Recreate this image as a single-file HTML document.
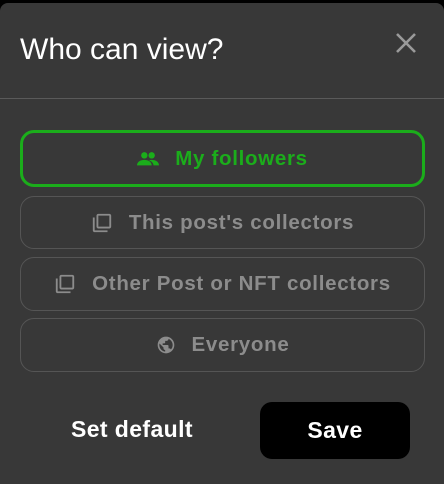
<!DOCTYPE html>
<html><head><meta charset="utf-8"><style>
*{margin:0;padding:0;box-sizing:border-box}
html,body{width:444px;height:484px;background:#000;overflow:hidden;font-family:"Liberation Sans",Arial,sans-serif}
.panel{position:absolute;left:0;top:3px;width:444px;height:481px;background:#383838;border-radius:8px 8px 0 0}
.title{position:absolute;left:20px;top:30px;font-size:30px;color:#fff;line-height:34px}
.x{position:absolute;left:396px;top:30px}
.hr{position:absolute;left:0;top:95px;width:444px;height:1px;background:#5a5a5a}
.opt{position:absolute;left:20px;width:405px;border:1px solid #555;border-radius:14px;display:flex;align-items:center;justify-content:center;font-weight:bold;font-size:20.5px;letter-spacing:0.7px;color:#8c8c8c;gap:16px}
.opt svg{fill:#8c8c8c}
.sel{border:3px solid #1bad1b;color:#1bad1b}
.sel svg{fill:#1bad1b}
.sd{position:absolute;left:71px;top:413px;font-size:23px;letter-spacing:0.4px;font-weight:bold;color:#fff}
.save{position:absolute;left:260px;top:399px;width:150px;height:57px;background:#000;border-radius:12px;color:#fff;font-weight:bold;font-size:23px;letter-spacing:0.4px;display:flex;align-items:center;justify-content:center}
</style></head><body>
<div class="panel">
<div class="title">Who can view?</div>
<svg class="x" width="20" height="20" viewBox="0 0 20 20"><path d="M1 1L19 19M19 1L1 19" stroke="#9a9a9a" stroke-width="2.6"/></svg>
<div class="hr"></div>
<div class="opt sel" style="top:127px;height:57px"><svg width="22" height="16" viewBox="0 0 24 16"><circle cx="8" cy="4" r="3.5"/><circle cx="16" cy="4" r="3.5"/><path d="M0 15c0-4 4-6 8-6s8 2 8 6z"/><path d="M13 9.3c1-.2 2-.3 3-.3 4 0 8 2 8 6h-6c0-2.5-2-4.5-5-5.7z"/></svg>My followers</div>
<div class="opt" style="top:193px;height:53px"><svg width="22" height="22" viewBox="0 0 24 24"><path d="M4 6H2v14c0 1.1.9 2 2 2h14v-2H4V6zm16-4H8c-1.1 0-2 .9-2 2v12c0 1.1.9 2 2 2h12c1.1 0 2-.9 2-2V4c0-1.1-.9-2-2-2zm0 14H8V4h12v12z"/></svg>This post's collectors</div>
<div class="opt" style="top:254px;height:54px"><svg width="22" height="22" viewBox="0 0 24 24"><path d="M4 6H2v14c0 1.1.9 2 2 2h14v-2H4V6zm16-4H8c-1.1 0-2 .9-2 2v12c0 1.1.9 2 2 2h12c1.1 0 2-.9 2-2V4c0-1.1-.9-2-2-2zm0 14H8V4h12v12z"/></svg>Other Post or NFT collectors</div>
<div class="opt" style="top:315px;height:54px"><svg width="20" height="20" viewBox="0 0 24 24"><path d="M12 2C6.48 2 2 6.48 2 12s4.48 10 10 10 10-4.48 10-10S17.52 2 12 2zm-1 17.93c-3.95-.49-7-3.850-7-7.93 0-.62.08-1.21.21-1.79L9 15v1c0 1.1.9 2 2 2v1.93zm6.9-2.54c-.26-.81-1-1.39-1.9-1.39h-1v-3c0-.55-.45-1-1-1H8v-2h2c.55 0 1-.45 1-1V7h2c1.1 0 2-.9 2-2v-.41c2.93 1.19 5 4.06 5 7.41 0 2.08-.8 3.97-2.1 5.39z"/></svg>Everyone</div>
<div class="sd">Set default</div>
<div class="save">Save</div>
</div>
</body></html>
